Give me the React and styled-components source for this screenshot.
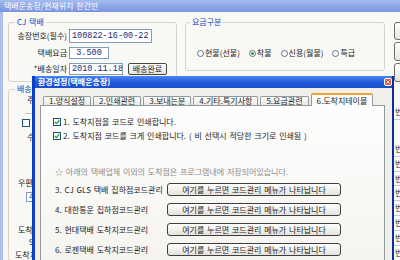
import React from 'react';
import styled, { createGlobalStyle } from 'styled-components';

const GlobalStyle = createGlobalStyle`
  html, body { margin: 0; padding: 0; }
  body {
    width: 400px;
    height: 260px;
    overflow: hidden;
    font-family: "Noto Sans CJK KR", "Noto Sans", sans-serif;
    font-size: 8px;
    line-height: 10px;
    word-spacing: 1px;
    color: #1e1e1e;
    background: #f8f8f5;
  }
`;

const Screen = styled.div`
  position: relative;
  width: 400px;
  height: 260px;
  overflow: hidden;
`;

const MainWindow = styled.div`
  display: flex;
  flex-direction: column;
  height: 100%;
`;

const TitleBar = styled.div`
  flex: none;
  height: 12px;
  padding-left: 4px;
  background: linear-gradient(#a3bbef, #7995e0);
  color: #fff;
  line-height: 12px;
`;

const WindowBody = styled.div`
  flex: 1;
  display: flex;
  gap: 9px;
  padding: 5px 0 0 5px;
  border-left: 3px solid #aebfe9;
  background: #f8f8f5;
  overflow: hidden;
`;

const MainColumn = styled.div`
  flex: none;
  width: 377px;
  display: flex;
  flex-direction: column;
`;

const TopRow = styled.div`
  display: flex;
  gap: 8px;
  align-items: flex-start;
`;

const Group = styled.fieldset`
  margin: ${p => p.$margin || 0};
  padding: ${p => p.$pad};
  width: ${p => p.$w}px;
  min-width: 0;
  box-sizing: border-box;
  border: 1px solid #d5d5cb;
  border-radius: 3px;
  flex: ${p => (p.$grow ? 1 : 'none')};
`;

const Legend = styled.legend`
  padding: 0 2px;
  color: #1746c9;
  line-height: 10px;
`;

const FormGrid = styled.div`
  display: grid;
  grid-template-columns: 52px auto;
  column-gap: 2px;
  row-gap: 4px;
  align-items: center;
`;

const FieldLabel = styled.span`
  text-align: right;
  white-space: nowrap;
`;

const FieldLine = styled.div`
  display: flex;
  align-items: center;
  gap: 5px;
`;

const InputBox = styled.div`
  box-sizing: border-box;
  width: ${p => p.$w}px;
  height: ${p => p.$h}px;
  padding: 0 2px;
  border: 1px solid #7f9db9;
  background: #fff;
  color: #1b2a78;
  font-family: "Liberation Mono", "DejaVu Sans Mono", monospace;
  font-size: 8.5px;
  word-spacing: 0;
  line-height: ${p => p.$h - 2}px;
  text-align: ${p => p.$align || 'left'};
  white-space: nowrap;
  overflow: hidden;
`;

const SmallButton = styled.div`
  box-sizing: border-box;
  width: ${p => p.$w}px;
  height: ${p => p.$h}px;
  border: 1px solid #474747;
  border-radius: 2px;
  background: linear-gradient(#ffffff, #e4e3dc);
  line-height: ${p => p.$h - 2}px;
  text-align: center;
  white-space: nowrap;
  overflow: hidden;
`;

const RadioRow = styled.div`
  display: flex;
  align-items: center;
  gap: 9px;
  height: 10px;
  margin: 21px 0 12px 7px;
`;

const RadioItem = styled.label`
  display: flex;
  align-items: center;
  gap: 1px;
  white-space: nowrap;
`;

const Item = styled.div`
  display: flex;
  align-items: center;
  height: ${p => p.$h || 10}px;
  margin: ${p => p.$top || 0}px 0 0 ${p => p.$left || 0}px;
  white-space: nowrap;
`;

const Divider = styled.div`
  height: 1px;
  margin: 8px 0 0 10px;
  background: #c9c9c0;
`;

const SideColumn = styled.div`
  flex: 1;
  display: flex;
  flex-direction: column;
  gap: 2px;
  padding-top: 5px;
  overflow: hidden;
`;

const SideButton = styled.div`
  flex: none;
  box-sizing: border-box;
  width: 40px;
  height: ${p => p.$h}px;
  border: 1px solid #6d6d6d;
  border-radius: 3px;
  background: linear-gradient(#ffffff, #e6e5df);
`;

const SideList = styled.div`
  margin-top: 21px;
  display: flex;
  flex-direction: column;
  background: #fbfbfb;
`;

const SideRow = styled.div`
  flex: none;
  height: 14.85px;
  box-sizing: border-box;
  border-bottom: 1px solid #b9c9ee;
  margin-bottom: ${p => p.$gap || 0}px;
  line-height: 14px;
  padding-left: 1px;
  white-space: nowrap;
`;

const Dialog = styled.div`
  position: absolute;
  left: 32px;
  top: 76px;
  width: 362px;
  height: 190px;
  box-sizing: border-box;
  display: flex;
  flex-direction: column;
  border-left: 3px solid #0c3fc6;
  border-right: 2px solid #0b2f9c;
  background: #f0efea;
`;

const DialogTitle = styled.div`
  flex: none;
  height: 12px;
  display: flex;
  align-items: center;
  justify-content: space-between;
  padding-left: 3px;
  background: linear-gradient(#4a86f2, #2159dc 50%, #1a4fcd);
  color: #fff;
  font-weight: bold;
  line-height: 12px;
`;

const CloseBox = styled.div`
  width: 8px;
  height: 8px;
  display: flex;
`;

const DialogBody = styled.div`
  flex: 1;
  display: flex;
  flex-direction: column;
  padding: 5px 7px 0 5px;
`;

const TabStrip = styled.div`
  flex: none;
  display: flex;
  align-items: flex-end;
  gap: 2px;
  height: 12px;
  padding-left: 3px;
  position: relative;
  z-index: 1;
`;

const Tab = styled.div`
  box-sizing: border-box;
  height: ${p => (p.$active ? 13 : 9)}px;
  margin-bottom: ${p => (p.$active ? -1 : 0)}px;
  padding: 0 5px;
  border: 1px solid #919b9c;
  border-top: ${p => (p.$active ? '2px solid #f0a33a' : '1px solid #919b9c')};
  border-bottom: none;
  border-radius: 2px 2px 0 0;
  background: ${p => (p.$active ? '#fcfcfb' : 'linear-gradient(#ffffff, #e9e8e2)')};
  line-height: ${p => (p.$active ? 11 : 8)}px;
  white-space: nowrap;
`;

const Panel = styled.div`
  flex: 1;
  display: flex;
  flex-direction: column;
  padding: 10px 0 0 12px;
  border: 1px solid #919b9c;
  background: linear-gradient(#fdfdfd, #f5f4ef);
`;

const CheckRow = styled.div`
  display: flex;
  align-items: center;
  gap: 2px;
  height: 12px;
  margin-top: ${p => p.$top || 0}px;
  white-space: nowrap;
`;

const Note = styled.div`
  height: 12px;
  line-height: 12px;
  margin: 24px 0 0 2px;
  color: #8c8c8c;
  white-space: nowrap;
`;

const CodeRows = styled.div`
  display: grid;
  grid-template-columns: 112px 174px;
  row-gap: 7px;
  align-items: center;
  margin: 5px 0 0 2px;
`;

const CodeLabel = styled.span`
  white-space: nowrap;
`;

const CodeButton = styled.div`
  box-sizing: border-box;
  height: 13px;
  border: 1px solid #3e3e3e;
  border-radius: 3px;
  background: linear-gradient(#ffffff, #e3e2db);
  line-height: 11px;
  text-align: center;
  white-space: nowrap;
`;

const CheckIcon = ({ checked }) => (
  <svg width="8" height="8" viewBox="0 0 8 8">
    <rect x="0.5" y="0.5" width="7" height="7" fill="#fff" stroke="#1c5180" />
    {checked && (
      <path d="M1.8 4 L3.3 5.6 L6.3 2.2" fill="none" stroke="#21a121" strokeWidth="1.3" />
    )}
  </svg>
);

const RadioIcon = ({ on }) => (
  <svg width="7" height="7" viewBox="0 0 7 7">
    <circle cx="3.5" cy="3.5" r="3" fill="#fff" stroke="#3d4f6a" strokeWidth="0.8" />
    {on && <circle cx="3.5" cy="3.5" r="1.5" fill="#2a9d2a" />}
  </svg>
);

const CloseIcon = () => (
  <svg width="8" height="8" viewBox="0 0 8 8">
    <rect x="0.5" y="0.5" width="7" height="7" rx="1.5" fill="#e0563c" stroke="#fff" />
    <path d="M2.5 2.5 L5.5 5.5 M5.5 2.5 L2.5 5.5" stroke="#fff" strokeWidth="1" />
  </svg>
);

const radios = [
  { label: '현불(선불)', on: false },
  { label: '착불', on: true },
  { label: '신용(월불)', on: false },
  { label: '특급', on: false },
];

const tabs = ['1.양식설정', '2.인쇄관련', '3.보내는분', '4.기타.특기사항', '5.요금관련', '6.도착지테이블'];

const codeRows = [
  '3. CJ GLS 택배 집하점코드관리',
  '4. 대한통운 집하점코드관리',
  '5. 현대택배 도착지코드관리',
  '6. 로젠택배 도착지코드관리',
];

const sideRows = ['번호', '번호', '번호', '번호', '번호', '번호', '번호', '번호', '번호'];

export default function App() {
  return (
    <Screen>
      <GlobalStyle />
      <MainWindow>
        <TitleBar>택배운송장/현재위치 한건만</TitleBar>
        <WindowBody>
          <MainColumn>
            <TopRow>
              <Group $w={169} $pad="2px 0 6px 6px">
                <Legend>CJ 택배</Legend>
                <FormGrid>
                  <FieldLabel>송장번호(필수)</FieldLabel>
                  <InputBox $w={83} $h={14}>100822-16-00-22</InputBox>
                  <FieldLabel>택배요금</FieldLabel>
                  <InputBox $w={40} $h={12} $align="center">3.500</InputBox>
                  <FieldLabel>*배송일자</FieldLabel>
                  <FieldLine>
                    <InputBox $w={54} $h={12}>2010.11.18</InputBox>
                    <SmallButton $w={39} $h={12}>배송완료</SmallButton>
                  </FieldLine>
                </FormGrid>
              </Group>
              <Group $w={200} $pad="0 4px">
                <Legend>요금구분</Legend>
                <RadioRow>
                  {radios.map(r => (
                    <RadioItem key={r.label}>
                      <RadioIcon on={r.on} />
                      {r.label}
                    </RadioItem>
                  ))}
                </RadioRow>
              </Group>
            </TopRow>
            <Group $w={377} $grow $margin="2px 0 0 0" $pad="0 0 0 6px">
              <Legend>배송지</Legend>
              <Item $top={1} $left={12}>주소</Item>
              <Divider />
              <Item $top={5} $left={7} $h={8}><CheckIcon /></Item>
              <Item $top={5} $left={12}>수취</Item>
              <Item $top={36} $left={3}>우편</Item>
              <Item $top={4} $left={11}>
                <InputBox $w={40} $h={10}>4</InputBox>
              </Item>
              <Item $top={23} $left={3}>도착</Item>
              <Item $top={2} $left={14}>9</Item>
              <Item $top={3}>도착지</Item>
            </Group>
          </MainColumn>
          <SideColumn>
            <SideButton $h={18} />
            <SideButton $h={19} />
            <SideButton $h={19} />
            <SideList>
              <SideRow $gap={22}>번</SideRow>
              {sideRows.map((t, i) => (
                <SideRow key={i}>{t.slice(0, 1)}</SideRow>
              ))}
            </SideList>
          </SideColumn>
        </WindowBody>
      </MainWindow>

      <Dialog>
        <DialogTitle>
          환경설정(택배운송장)
          <CloseBox><CloseIcon /></CloseBox>
        </DialogTitle>
        <DialogBody>
          <TabStrip>
            {tabs.map((t, i) => (
              <Tab key={t} $active={i === tabs.length - 1}>{t}</Tab>
            ))}
          </TabStrip>
          <Panel>
            <CheckRow><CheckIcon checked />1. 도착지점을 코드로 인쇄합니다.</CheckRow>
            <CheckRow $top={2}><CheckIcon checked />2. 도착지점 코드를 크게 인쇄합니다. ( 비 선택시 적당한 크기로 인쇄됨 )</CheckRow>
            <Note>☆ 아래의 택배업체 이외의 도착점은 프로그램내에 저장되어있습니다.</Note>
            <CodeRows>
              {codeRows.map(label => (
                <React.Fragment key={label}>
                  <CodeLabel>{label}</CodeLabel>
                  <CodeButton>여기를 누르면 코드관리 메뉴가 나타납니다</CodeButton>
                </React.Fragment>
              ))}
            </CodeRows>
          </Panel>
        </DialogBody>
      </Dialog>
    </Screen>
  );
}
